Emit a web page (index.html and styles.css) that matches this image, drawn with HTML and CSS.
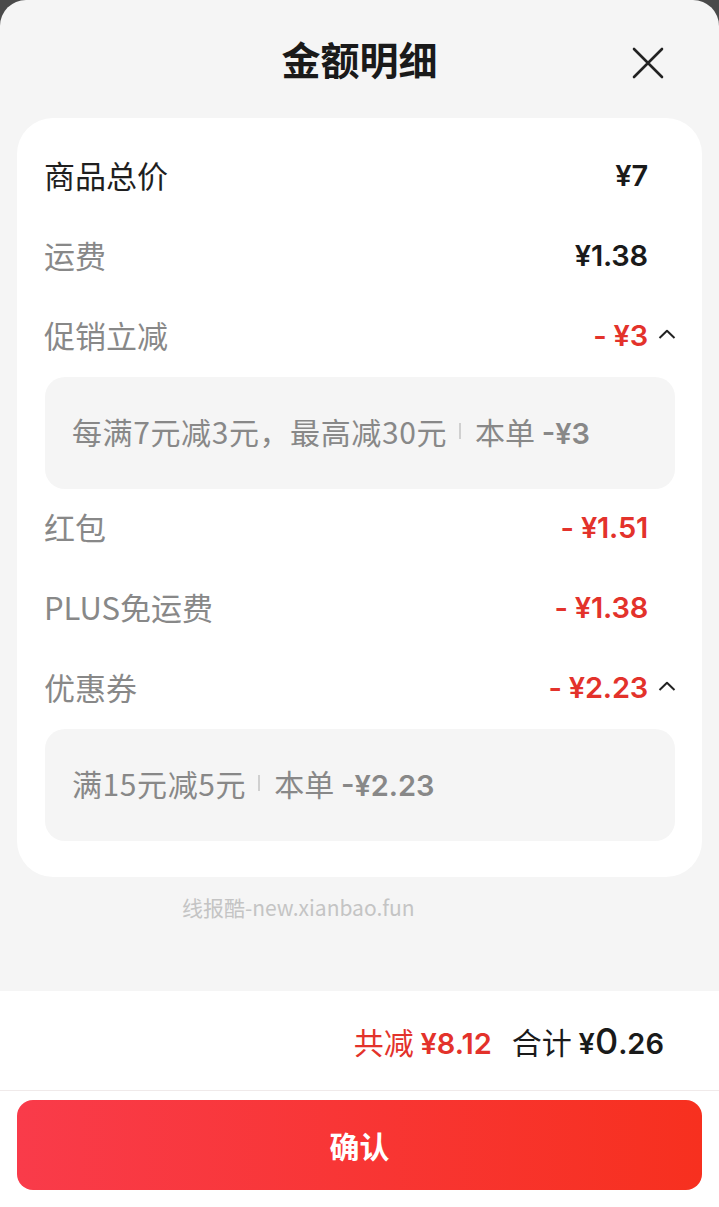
FILE: index.html
```html
<!DOCTYPE html>
<html lang="zh-CN">
<head>
<meta charset="utf-8">
<title>金额明细</title>
<link rel="stylesheet" href="styles.css">
</head>
<body>
<div class="sheet">
  <header class="header">
    <h1 class="title">金额明细</h1>
    <button class="close" aria-label="关闭">
      <svg width="32" height="32" viewBox="0 0 32 32"><path d="M2 2 L30 30 M30 2 L2 30" stroke="#222" stroke-width="2.6" stroke-linecap="round" fill="none"/></svg>
    </button>
  </header>

  <section class="card">
    <div class="row">
      <span class="label label-dark">商品总价</span>
      <span class="value">¥7</span>
      <span class="caret"></span>
    </div>
    <div class="row">
      <span class="label">运费</span>
      <span class="value">¥1.38</span>
      <span class="caret"></span>
    </div>
    <div class="row">
      <span class="label">促销立减</span>
      <span class="value red">- ¥3</span>
      <span class="caret"><svg width="18" height="10" viewBox="0 0 18 10"><path d="M1.5 9 L9 1.8 L16.5 9" stroke="#222" stroke-width="2" fill="none" stroke-linejoin="round"/></svg></span>
    </div>
    <div class="detail">
      <span>每满7元减3元，最高减30元</span><span class="sep"></span><span>本单 <span class="num">-¥3</span></span>
    </div>
    <div class="row">
      <span class="label">红包</span>
      <span class="value red">- ¥1.51</span>
      <span class="caret"></span>
    </div>
    <div class="row">
      <span class="label">PLUS免运费</span>
      <span class="value red">- ¥1.38</span>
      <span class="caret"></span>
    </div>
    <div class="row">
      <span class="label">优惠券</span>
      <span class="value red">- ¥2.23</span>
      <span class="caret"><svg width="18" height="10" viewBox="0 0 18 10"><path d="M1.5 9 L9 1.8 L16.5 9" stroke="#222" stroke-width="2" fill="none" stroke-linejoin="round"/></svg></span>
    </div>
    <div class="detail">
      <span>满15元减5元</span><span class="sep"></span><span>本单 <span class="num">-¥2.23</span></span>
    </div>
  </section>

  <p class="watermark">线报酷-new.xianbao.fun</p>

  <div class="grow"></div>

  <footer class="footer">
    <div class="summary">
      <span class="saved">共减 <b class="amt">¥8.12</b></span>
      <span class="total">合计 <b class="amt">¥<span class="big">0</span>.26</b></span>
    </div>
    <div class="actions">
      <button class="confirm">确认</button>
    </div>
  </footer>
</div>
</body>
</html>
```

FILE: styles.css
```css
* { box-sizing: border-box; }
html, body { margin: 0; padding: 0; }
body {
  background: #4a4a4a;
  font-family: "Noto Sans CJK SC", "Noto Sans", sans-serif;
  color: #222;
}
.sheet {
  min-height: 1207px;
  background: #f5f5f5;
  border-radius: 26px 26px 0 0;
  display: flex;
  flex-direction: column;
}
.header {
  position: relative;
  height: 118px;
  display: flex;
  align-items: center;
  justify-content: center;
}
.title {
  margin: 0;
  font-size: 39px;
  font-weight: 700;
  color: #1a1a1a;
  line-height: 1;
  padding-bottom: 2px;
}
.close {
  position: absolute;
  right: 55px;
  top: 47px;
  width: 32px;
  height: 32px;
  padding: 0;
  border: 0;
  background: none;
  display: flex;
}
.card {
  margin: 0 17px;
  background: #fff;
  border-radius: 36px;
  padding: 19px 26px 36px 27px;
}
.row {
  height: 80px;
  display: grid;
  grid-template-columns: 1fr auto 28px;
  align-items: center;
}
.label {
  font-size: 31px;
  color: #888;
  padding-bottom: 5px;
}
.label-dark { color: #1f1f1f; }
.value {
  font-family: "Inter", "Noto Sans", sans-serif;
  font-weight: 600;
  font-size: 29px;
  color: #1a1a1a;
  letter-spacing: -0.2px;
  padding-bottom: 3px;
}
.value.red { color: #e3322b; }
.caret {
  display: flex;
  justify-content: flex-end;
  align-items: center;
  padding-bottom: 6px;
}
.detail {
  height: 112px;
  background: #f5f5f5;
  border-radius: 20px;
  margin: 0 1px;
  padding: 0 27px 4px;
  display: flex;
  align-items: center;
  font-size: 30px;
  color: #888;
}
.detail > span:first-child { letter-spacing: 0.6px; }
.detail .num {
  font-family: "Inter", "Noto Sans", sans-serif;
  font-weight: 600;
  font-size: 29px;
}
.sep {
  display: inline-block;
  width: 2px;
  height: 16px;
  background: #d0d0d0;
  margin: 0 14px 0 12px;
}
.watermark {
  margin: 18px 0 0 182px;
  font-size: 21px;
  color: #c4c4c4;
  line-height: 24px;
}
.grow { flex: 1; }
.footer {
  background: #fff;
  height: 216px;
}
.summary {
  height: 100px;
  border-bottom: 1px solid #f0eaea;
  display: flex;
  justify-content: flex-end;
  align-items: center;
  gap: 20px;
  padding-right: 55px;
  font-size: 30px;
}
.saved { color: #e3322b; }
.total { color: #1a1a1a; }
.amt {
  font-family: "Inter", "Noto Sans", sans-serif;
  font-weight: 600;
  font-size: 29px;
}
.big { font-size: 36px; font-weight: 500; }
.actions {
  padding: 9px 17px 0;
}
.confirm {
  width: 100%;
  height: 90px;
  border: 0;
  border-radius: 16px;
  background: linear-gradient(90deg, #f93b4a 0%, #f7301f 100%);
  color: #fff;
  font-family: "Noto Sans CJK SC", sans-serif;
  font-size: 30px;
  font-weight: 700;
}
```
